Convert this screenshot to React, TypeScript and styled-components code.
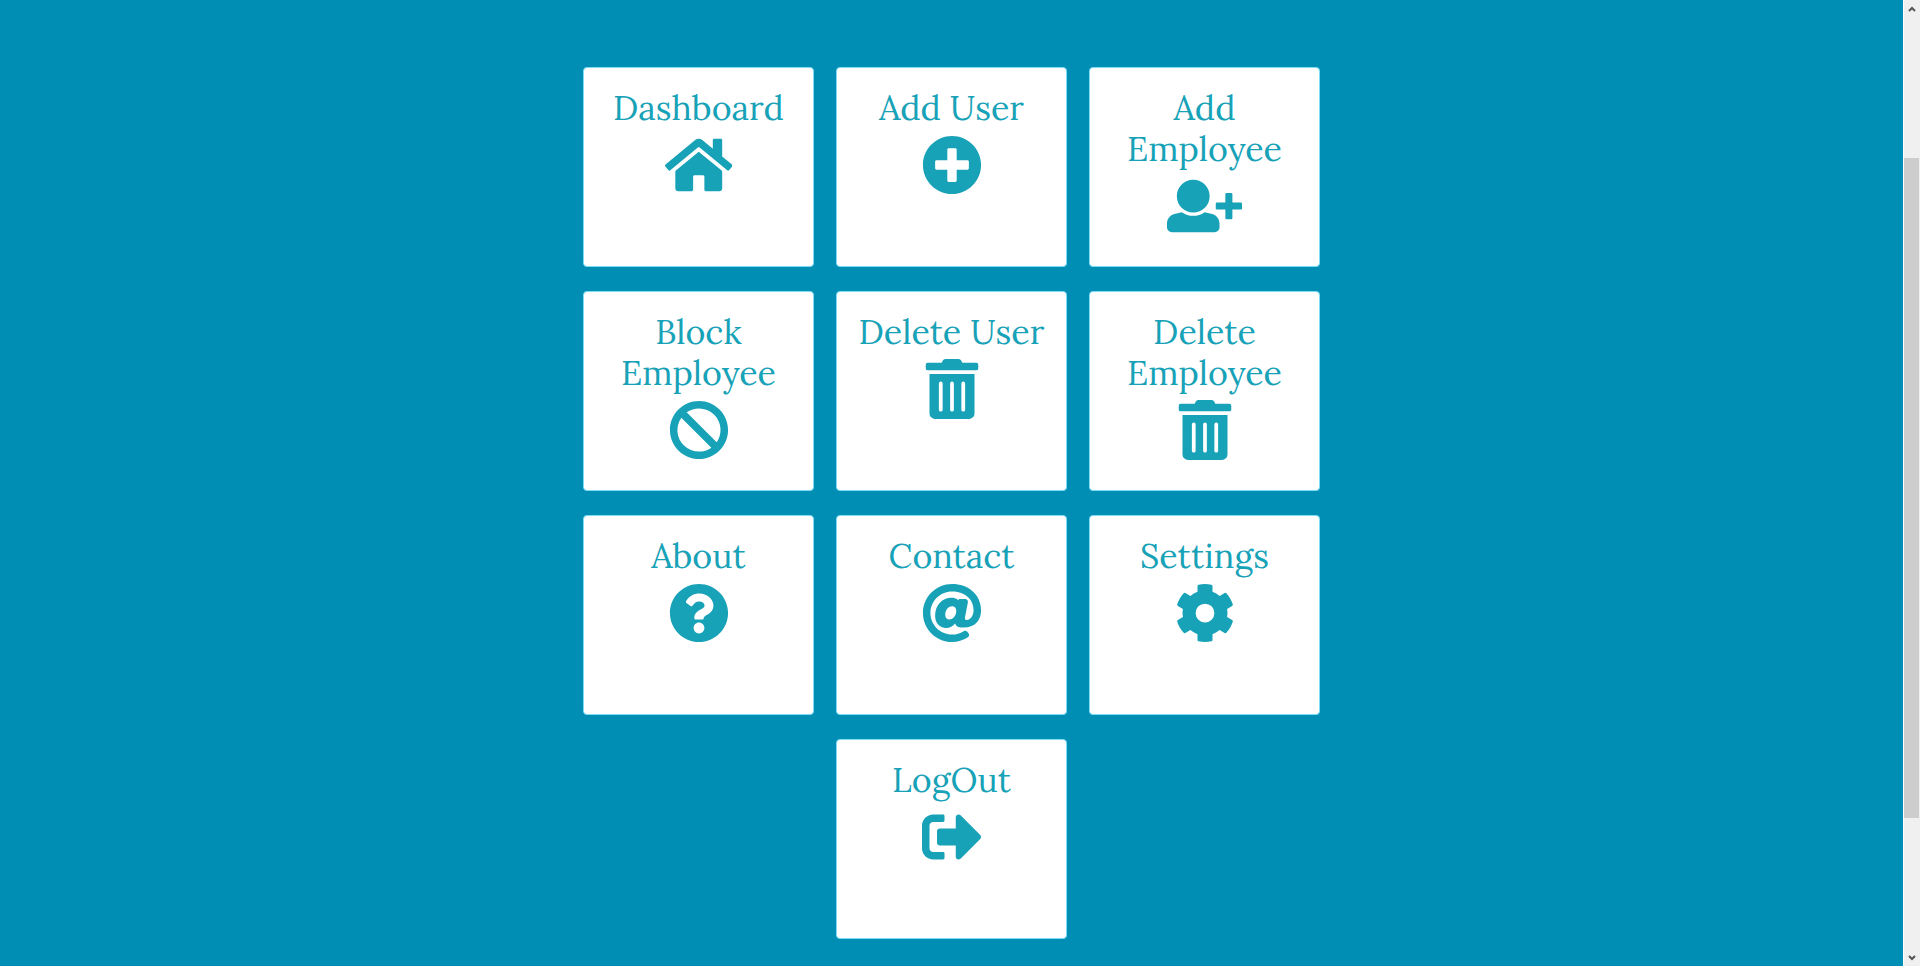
import React from "react";
import styled, { createGlobalStyle } from "styled-components";
import { FaAt, FaBan, FaPlusCircle, FaQuestionCircle, FaSignOutAlt, FaTrashAlt } from "react-icons/fa";

const GlobalStyle = createGlobalStyle`
  *, *::before, *::after { box-sizing: border-box; }
  body { margin: 0; background: #008eb4; }
`;

const Page = styled.div`
  display: flex;
  min-height: 100vh;
  background: #008eb4;
  font-family: Lora, "Liberation Serif", serif;
`;

const Main = styled.main`
  flex: 1;
  padding: 67px 16px 24px;
`;

const CardGrid = styled.nav`
  display: flex;
  flex-wrap: wrap;
  justify-content: center;
  gap: 24px 22px;
  max-width: 737px;
  margin: 0 auto;
`;

const Card = styled.a`
  display: flex;
  flex-direction: column;
  align-items: center;
  width: 231px;
  min-height: 200px;
  padding: 19px 20px;
  background: #fff;
  border: 1px solid #7fdcf5;
  border-radius: 4px;
  color: #17a2b8;
  text-align: center;
  text-decoration: none;

  svg {
    display: block;
    height: 60px;
    width: auto;
    fill: currentColor;
  }
`;

const Title = styled.h2`
  margin: 0 0 7px;
  font-size: 34px;
  line-height: 41px;
  font-weight: 400;
`;

const ScrollRail = styled.div`
  position: sticky;
  top: 0;
  display: flex;
  flex-direction: column;
  width: 17px;
  height: 100vh;
  padding-right: 1px;
  background: #f0f0f0;
  border-left: 1px solid #fff;
`;

const ScrollButton = styled.button`
  display: flex;
  align-items: center;
  justify-content: center;
  height: 17px;
  padding: 0;
  border: 0;
  background: transparent;

  svg {
    display: block;
    fill: none;
    stroke: #555;
    stroke-width: 2;
  }
`;

const ScrollSpace = styled.div<{ $share: number }>`
  flex: ${(p) => p.$share} 0 0;
`;

const ScrollThumb = styled(ScrollSpace)`
  background: #cdcdcd;
`;

const HomeIcon = () => (
  <svg viewBox="0 0 576 512" aria-hidden="true">
    <path d="M488 312.7V456c0 13.3-10.7 24-24 24H348c-6.6 0-12-5.4-12-12V356c0-6.6-5.4-12-12-12h-72c-6.6 0-12 5.4-12 12v112c0 6.6-5.4 12-12 12H112c-13.3 0-24-10.7-24-24V312.7c0-3.6 1.6-7 4.4-9.3l188-154.8c4.4-3.6 10.8-3.6 15.3 0l188 154.8c2.7 2.3 4.3 5.7 4.3 9.3zm83.6-60.9L488 182.9V44.4c0-6.6-5.4-12-12-12h-56c-6.6 0-12 5.4-12 12V117l-89.5-73.7c-17.7-14.6-43.3-14.6-61 0L4.4 251.8c-5.1 4.2-5.8 11.8-1.6 16.9l25.5 31c4.2 5.1 11.8 5.8 16.9 1.6l235.2-193.7c4.4-3.6 10.8-3.6 15.3 0l235.2 193.7c5.1 4.2 12.7 3.5 16.9-1.6l25.5-31c4.2-5.2 3.4-12.7-1.7-16.9z" />
  </svg>
);

const UserPlusIcon = () => (
  <svg viewBox="0 0 640 512" aria-hidden="true">
    <g transform="translate(0 32) scale(.875)">
      <path d="M256 0c88.366 0 160 71.634 160 160s-71.634 160-160 160S96 248.366 96 160 167.634 0 256 0zm183.283 333.821l-71.313-17.828c-74.923 53.89-165.738 41.864-223.94 0l-71.313 17.828C29.981 344.505 0 382.903 0 426.955V464c0 26.51 21.49 48 48 48h416c26.51 0 48-21.49 48-48v-37.045c0-44.052-29.981-82.45-72.717-93.134z" />
    </g>
    <rect x="416" y="226" width="224" height="60" rx="10" />
    <rect x="498" y="144" width="60" height="224" rx="10" />
  </svg>
);

const CogIcon = () => (
  <svg viewBox="0 0 512 512" aria-hidden="true">
    <path
      fillRule="evenodd"
      d="M444.8 291.1l42.6 24.6c4.9 2.8 7.1 8.6 5.5 14-11.1 35.6-30 67.8-54.7 94.6a12 12 0 0 1-14.9 2.2l-42.5-24.6a191.6 191.6 0 0 1-60.8 35.1v49.2a12 12 0 0 1-9.4 11.7c-35 7.9-72.5 8.3-109.2 0-5.5-1.2-9.4-6.1-9.4-11.7v-49.2a191.6 191.6 0 0 1-60.8-35.1l-42.5 24.6a12 12 0 0 1-14.9-2.2C49.1 397.5 30.2 365.3 19.1 329.7c-1.6-5.4.6-11.2 5.5-14l42.6-24.6a193.5 193.5 0 0 1 0-70.2l-42.6-24.6c-4.9-2.8-7.1-8.6-5.5-14 11.1-35.6 30-67.8 54.7-94.6a12 12 0 0 1 14.9-2.2l42.5 24.6A191.6 191.6 0 0 1 192 75V25.8a12 12 0 0 1 9.4-11.7c35-7.9 72.5-8.3 109.2 0 5.5 1.2 9.4 6.1 9.4 11.7V75a191.6 191.6 0 0 1 60.8 35.1l42.5-24.6a12 12 0 0 1 14.9 2.2c24.7 26.8 43.6 59 54.7 94.6 1.6 5.4-.6 11.2-5.5 14l-42.6 24.6a193.5 193.5 0 0 1 0 70.2zM336 256a80 80 0 1 0-160 0 80 80 0 0 0 160 0z"
    />
  </svg>
);

const actions: { title: string; href: string; Icon: React.ElementType }[] = [
  { title: "Dashboard", href: "#dashboard", Icon: HomeIcon },
  { title: "Add User", href: "#add-user", Icon: FaPlusCircle },
  { title: "Add Employee", href: "#add-employee", Icon: UserPlusIcon },
  { title: "Block Employee", href: "#block-employee", Icon: FaBan },
  { title: "Delete User", href: "#delete-user", Icon: FaTrashAlt },
  { title: "Delete Employee", href: "#delete-employee", Icon: FaTrashAlt },
  { title: "About", href: "#about", Icon: FaQuestionCircle },
  { title: "Contact", href: "#contact", Icon: FaAt },
  { title: "Settings", href: "#settings", Icon: CogIcon },
  { title: "LogOut", href: "#logout", Icon: FaSignOutAlt },
];

export default function App() {
  return (
    <>
      <GlobalStyle />
      <Page>
        <Main>
          <CardGrid>
            {actions.map(({ title, href, Icon }) => (
              <Card key={title} href={href}>
                <Title>{title}</Title>
                <Icon />
              </Card>
            ))}
          </CardGrid>
        </Main>
        <ScrollRail>
          <ScrollButton type="button" aria-label="Scroll up">
            <svg width="8" height="6" viewBox="0 0 8 6"><path d="M1 5l3-3 3 3" /></svg>
          </ScrollButton>
          <ScrollSpace $share={141} />
          <ScrollThumb $share={660} />
          <ScrollSpace $share={131} />
          <ScrollButton type="button" aria-label="Scroll down">
            <svg width="8" height="6" viewBox="0 0 8 6"><path d="M1 1l3 3 3-3" /></svg>
          </ScrollButton>
        </ScrollRail>
      </Page>
    </>
  );
}
